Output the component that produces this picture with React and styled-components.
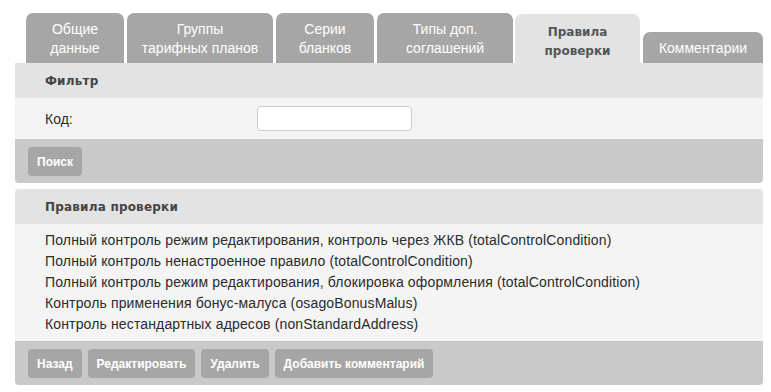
import React from "react"
import styled, { createGlobalStyle } from "styled-components"

const GlobalStyle = createGlobalStyle`
    body {
        margin: 0;
        background: #fff;
        font-family: "Liberation Sans", Arial, sans-serif;
        font-size: 14px;
        color: #2b2b2b;
    }
`

const Page = styled.div`
    width: 748px;
    padding: 13px 0 0 15px;
`

const TabBar = styled.div`
    display: flex;
    align-items: flex-end;
    column-gap: 3px;
    padding-left: 11px;
`

const Tab = styled.div`
    width: ${p => p.$width}px;
    box-sizing: border-box;
    padding: ${p => (p.$active ? "9px 0 2px" : "7px 0 5px")};
    margin-left: ${p => (p.$active ? "-1px" : "0")};
    background: ${p => (p.$active ? "#e3e3e3" : "#a6a6a6")};
    color: ${p => (p.$active ? "#555" : "#fff")};
    font-family: ${p => (p.$active ? '"DejaVu Sans", sans-serif' : '"Liberation Sans", Arial, sans-serif')};
    font-weight: ${p => (p.$active ? "bold" : "normal")};
    font-size: ${p => (p.$active ? "12px" : "14px")};
    line-height: 19px;
    text-align: center;
    border-radius: 7px 7px 0 0;
`

const Panel = styled.div`
    overflow: hidden;
    margin-bottom: 6px;
    border-radius: ${p => (p.$first ? "0 0 4px 4px" : "4px")};
`

const PanelHeader = styled.div`
    background: #e3e3e3;
    height: 35px;
    display: flex;
    align-items: center;
    padding-left: 30px;
    font-family: "DejaVu Sans", sans-serif;
    font-weight: bold;
    font-size: 12px;
    letter-spacing: 0.2px;
    color: #444;
`

const FilterRow = styled.div`
    background: #f4f4f4;
    display: flex;
    align-items: center;
    padding: 8px 0 8px 30px;
`

const Label = styled.label`
    width: 212px;
`

const Input = styled.input`
    box-sizing: border-box;
    width: 155px;
    height: 25px;
    border: 1px solid #ccc;
    border-radius: 4px;
    background: #fff;
`

const List = styled.div`
    background: #f4f4f4;
    padding: 6px 30px;
    line-height: 21px;
    letter-spacing: 0.14px;
`

const ButtonBar = styled.div`
    background: #c9c9c9;
    display: flex;
    column-gap: 6px;
    padding: 8px 13px 7px;
`

const Button = styled.button`
    height: 29px;
    padding: 0 9px;
    border: none;
    border-radius: 4px;
    background: #a6a6a6;
    color: #fff;
    font-family: "Liberation Sans", Arial, sans-serif;
    font-weight: bold;
    font-size: 12px;
`

const tabs = [
    { label: <>Общие<br />данные</>, width: 98 },
    { label: <>Группы<br />тарифных планов</>, width: 146 },
    { label: <>Серии<br />бланков</>, width: 98 },
    { label: <>Типы доп.<br />соглашений</>, width: 136 },
    { label: <>Правила<br />проверки</>, width: 125, active: true },
    { label: "Комментарии", width: 120 },
]

const rules = [
    "Полный контроль режим редактирования, контроль через ЖКВ (totalControlCondition)",
    "Полный контроль ненастроенное правило (totalControlCondition)",
    "Полный контроль режим редактирования, блокировка оформления (totalControlCondition)",
    "Контроль применения бонус-малуса (osagoBonusMalus)",
    "Контроль нестандартных адресов (nonStandardAddress)",
]

const App = () => {
    return (
        <Page>
            <GlobalStyle />
            <TabBar>
                {tabs.map((t, i) => (
                    <Tab key={i} $width={t.width} $active={t.active}>{t.label}</Tab>
                ))}
            </TabBar>
            <Panel $first>
                <PanelHeader>Фильтр</PanelHeader>
                <FilterRow>
                    <Label>Код:</Label>
                    <Input />
                </FilterRow>
                <ButtonBar>
                    <Button>Поиск</Button>
                </ButtonBar>
            </Panel>
            <Panel>
                <PanelHeader>Правила проверки</PanelHeader>
                <List>
                    {rules.map(r => <div key={r}>{r}</div>)}
                </List>
                <ButtonBar>
                    <Button>Назад</Button>
                    <Button>Редактировать</Button>
                    <Button>Удалить</Button>
                    <Button>Добавить комментарий</Button>
                </ButtonBar>
            </Panel>
        </Page>
    )
}

export default App
